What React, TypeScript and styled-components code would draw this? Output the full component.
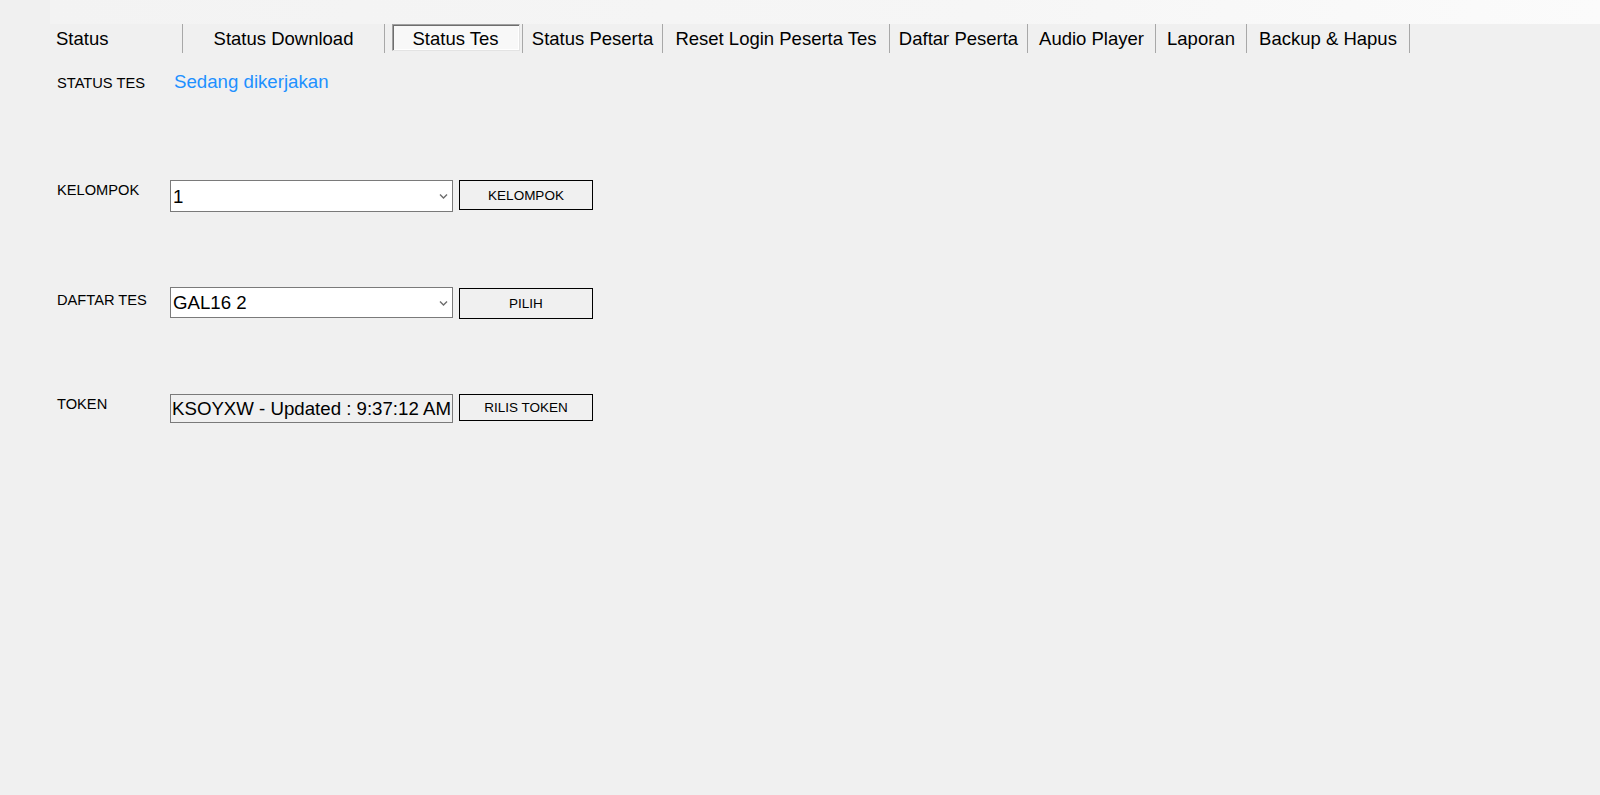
import styled, { createGlobalStyle } from "styled-components";

const GlobalStyle = createGlobalStyle`
  html, body {
    margin: 0;
    padding: 0;
    background: #f0f0f0;
    font-family: "Liberation Sans", Arial, sans-serif;
    color: #000;
  }
`;

const tabs = [
  { label: "Status", width: 133, left: true },
  { label: "Status Download", width: 202 },
  { label: "Status Tes", width: 138, active: true },
  { label: "Status Peserta", width: 140 },
  { label: "Reset Login Peserta Tes", width: 227 },
  { label: "Daftar Peserta", width: 138 },
  { label: "Audio Player", width: 128 },
  { label: "Laporan", width: 91 },
  { label: "Backup & Hapus", width: 163 },
];

function Chevron() {
  return (
    <svg width="9" height="6" viewBox="0 0 9 6">
      <path d="M1 1 L4.5 4.5 L8 1" fill="none" stroke="#6d6d6d" strokeWidth="1.4" />
    </svg>
  );
}

export default function App() {
  return (
    <Page>
      <GlobalStyle />
      <TopBand />
      <TabStrip>
        {tabs.map((t) => (
          <Tab key={t.label} $width={t.width} $left={t.left}>
            {t.active ? <ActiveTab>{t.label}</ActiveTab> : t.label}
          </Tab>
        ))}
      </TabStrip>

      <Content>
        <StatusRow>
          <Label>STATUS TES</Label>
          <StatusValue>Sedang dikerjakan</StatusValue>
        </StatusRow>

        <Form>
          <FormRow>
            <Label $offset={2}>KELOMPOK</Label>
            <ComboWrap $height={32}>
              <Combo defaultValue="1">
                <option value="1">1</option>
                <option value="2">2</option>
              </Combo>
              <ChevronBox><Chevron /></ChevronBox>
            </ComboWrap>
            <ActionButton $height={30}>KELOMPOK</ActionButton>
          </FormRow>

          <FormRow>
            <Label $offset={5}>DAFTAR TES</Label>
            <ComboWrap $height={31}>
              <Combo defaultValue="GAL16 2">
                <option value="GAL16 2">GAL16 2</option>
              </Combo>
              <ChevronBox><Chevron /></ChevronBox>
            </ComboWrap>
            <ActionButton $height={31} $offset={1}>PILIH</ActionButton>
          </FormRow>

          <FormRow>
            <Label $offset={2}>TOKEN</Label>
            <TokenField readOnly value="KSOYXW - Updated : 9:37:12 AM" />
            <ActionButton $height={27}>RILIS TOKEN</ActionButton>
          </FormRow>
        </Form>
      </Content>
    </Page>
  );
}

const Page = styled.div`
  width: 1600px;
  height: 795px;
  background: #f0f0f0;
  overflow: hidden;
`;

const TopBand = styled.div`
  height: 24px;
  margin-left: 50px;
  background: linear-gradient(to right, #f3f3f3, #f6f6f6 60%, #fbfbfb);
`;

const TabStrip = styled.div`
  display: flex;
  height: 29px;
  padding-left: 50px;
`;

const Tab = styled.div<{ $width: number; $left?: boolean }>`
  box-sizing: border-box;
  width: ${(p) => p.$width}px;
  height: 29px;
  display: flex;
  align-items: center;
  justify-content: ${(p) => (p.$left ? "flex-start" : "center")};
  padding-left: ${(p) => (p.$left ? "6px" : "0")};
  padding-top: 1px;
  border-right: 1px solid #a8a8a8;
  font-size: 18.5px;
  white-space: nowrap;
`;

const ActiveTab = styled.div`
  box-sizing: border-box;
  align-self: flex-start;
  width: 128px;
  height: 27px;
  margin-top: -1px;
  margin-left: 4px;
  display: flex;
  align-items: center;
  justify-content: center;
  padding-top: 3px;
  background: #f8f8f8;
  border-top: 1px solid #a0a0a0;
  border-left: 1px solid #a0a0a0;
  border-right: 1px solid #e3e3e3;
  border-bottom: 1px solid #e3e3e3;
  box-shadow: inset 1px 1px 0 #6e6e6e, inset -1px -1px 0 #ffffff;
`;

const Content = styled.div`
  padding-left: 57px;
`;

const StatusRow = styled.div`
  display: flex;
  align-items: baseline;
  height: 22px;
  margin-top: 18px;
`;

const Label = styled.div<{ $offset?: number }>`
  width: 113px;
  flex-shrink: 0;
  font-size: 14.67px;
  margin-top: ${(p) => p.$offset ?? 0}px;
`;

const StatusValue = styled.div`
  margin-left: 4px;
  font-size: 18.67px;
  color: #1e90ff;
`;

const Form = styled.div`
  margin-top: 87px;
`;

const FormRow = styled.div`
  display: grid;
  grid-template-columns: 113px 283px 134px;
  align-items: start;
  height: 107px;

  & > button {
    margin-left: 6px;
  }
`;

const ComboWrap = styled.div<{ $height: number }>`
  position: relative;
  height: ${(p) => p.$height}px;
`;

const Combo = styled.select`
  box-sizing: border-box;
  width: 100%;
  height: 100%;
  appearance: none;
  -webkit-appearance: none;
  margin: 0;
  padding: 0 20px 0 2px;
  border: 1px solid #7a7a7a;
  border-radius: 0;
  background: #fff;
  font-family: "Liberation Sans", Arial, sans-serif;
  font-size: 18.67px;
  color: #000;
  outline: none;
`;

const ChevronBox = styled.span`
  position: absolute;
  right: 5px;
  top: 50%;
  transform: translateY(-40%);
  display: flex;
  pointer-events: none;
`;

const TokenField = styled.input`
  box-sizing: border-box;
  width: 283px;
  height: 29px;
  margin: 0;
  padding: 0 0 0 1px;
  border: 1px solid #7a7a7a;
  border-radius: 0;
  background: #f0f0f0;
  font-family: "Liberation Sans", Arial, sans-serif;
  font-size: 18.67px;
  color: #000;
  outline: none;
`;

const ActionButton = styled.button<{ $height: number; $offset?: number }>`
  box-sizing: border-box;
  width: 134px;
  height: ${(p) => p.$height}px;
  margin-top: ${(p) => p.$offset ?? 0}px;
  padding: 0;
  border: 1px solid #000;
  border-radius: 0;
  background: #f0f0f0;
  font-family: "Liberation Sans", Arial, sans-serif;
  font-size: 13.5px;
  color: #000;
  cursor: pointer;
`;
